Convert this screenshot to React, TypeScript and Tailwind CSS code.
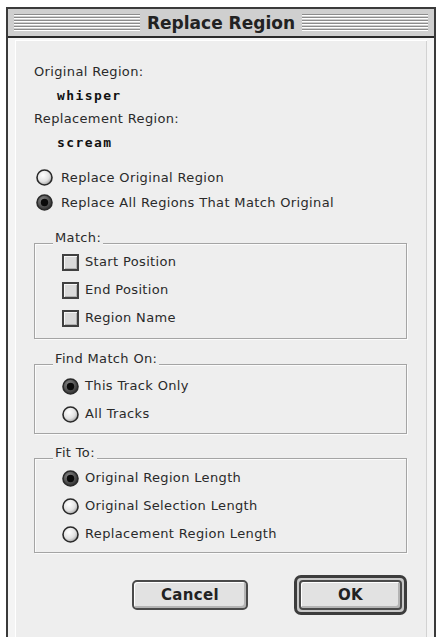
import React from 'react';

const body = "font-['DejaVu_Sans',sans-serif] text-[13px] tracking-[0.35px] text-[#2a2a2a]";

function Radio({ on }: { on?: boolean }) {
  return (
    <svg width="17" height="17" viewBox="0 0 17 17" className="shrink-0">
      <defs>
        <radialGradient id="rOff" cx="0.4" cy="0.35" r="0.7">
          <stop offset="0" stopColor="#ffffff" />
          <stop offset="0.6" stopColor="#e2e2e2" />
          <stop offset="1" stopColor="#9a9a9a" />
        </radialGradient>
        <radialGradient id="rOn" cx="0.4" cy="0.35" r="0.7">
          <stop offset="0" stopColor="#8a8a8a" />
          <stop offset="1" stopColor="#2a2a2a" />
        </radialGradient>
      </defs>
      <circle cx="8.5" cy="8.5" r="7.5" fill={on ? 'url(#rOn)' : 'url(#rOff)'} stroke="#2a2a2a" strokeWidth="1.6" />
      {on && <circle cx="8.5" cy="8.5" r="3.7" fill="#0a0a0a" />}
    </svg>
  );
}

function Check() {
  return (
    <span className="w-[17px] h-[17px] shrink-0 border-2 border-[#404040] bg-[#dadada] shadow-[inset_1px_1px_0_#f6f6f6,inset_-1px_-1px_0_#b0b0b0]" />
  );
}

function Group({ label, children, className }: { label: string; children: React.ReactNode; className: string }) {
  return (
    <div className={`relative ml-[18px] mr-[20px] border border-[#a4a4a4] shadow-[inset_1px_1px_0_#fbfbfb,1px_1px_0_#fbfbfb] ${className}`}>
      <span className="absolute left-[18px] top-[-15px] px-[2px] bg-[#eeeeee] leading-[18px]">{label}</span>
      {children}
    </div>
  );
}

function Row({ children }: { children: React.ReactNode }) {
  return <div className="h-[28px] flex items-center gap-[6px] pl-[27px]">{children}</div>;
}

export default function App() {
  return (
    <div className="w-[437px] h-[637px] bg-white overflow-hidden">
      <div className="ml-[6px] mt-[7px] w-[430px] h-[640px] border-2 border-[#3a3a3a] bg-[#f4f4f4] flex flex-col">
        {/* Title bar */}
        <div className="h-[29px] bg-[#cfcfcf] border-b-2 border-[#2a2a2a] flex items-center px-[6px]">
          <div className="flex-1 h-[18px] bg-[repeating-linear-gradient(to_bottom,#8c8c8c_0px,#8c8c8c_1px,#ffffff_1px,#ffffff_2px,#cfcfcf_2px,#cfcfcf_3px)]" />
          <span className="px-[7px] font-['DejaVu_Sans',sans-serif] font-bold text-[17px] text-[#222] leading-[20px]">Replace Region</span>
          <div className="flex-1 h-[18px] bg-[repeating-linear-gradient(to_bottom,#8c8c8c_0px,#8c8c8c_1px,#ffffff_1px,#ffffff_2px,#cfcfcf_2px,#cfcfcf_3px)]" />
        </div>

        {/* Content */}
        <div className={`mx-[7px] mt-[2px] flex-1 bg-[#eeeeee] border-l border-t border-white shadow-[inset_-1px_0_0_#d2d2d2] ${body}`}>
          <div className="pt-[19px] pl-[18px] leading-[24px]">
            <div>Original Region:</div>
            <div className="pl-[23px] font-['DejaVu_Sans_Mono',monospace] font-bold text-[13px] tracking-[1.4px] text-[#111] leading-[23px]">whisper</div>
            <div>Replacement Region:</div>
            <div className="pl-[23px] font-['DejaVu_Sans_Mono',monospace] font-bold text-[13px] tracking-[1.4px] text-[#111] leading-[23px]">scream</div>
          </div>

          <div className="mt-[11px] pl-[20px]">
            <div className="h-[25px] flex items-center gap-[8px]">
              <Radio />
              <span>Replace Original Region</span>
            </div>
            <div className="h-[25px] flex items-center gap-[8px]">
              <Radio on />
              <span>Replace All Regions That Match Original</span>
            </div>
          </div>

          <Group label="Match:" className="mt-[28px] pt-[4px] pb-[6px]">
            <Row><Check /><span>Start Position</span></Row>
            <Row><Check /><span>End Position</span></Row>
            <Row><Check /><span>Region Name</span></Row>
          </Group>

          <Group label="Find Match On:" className="mt-[25px] pt-[7px] pb-[5px]">
            <Row><Radio on /><span>This Track Only</span></Row>
            <Row><Radio /><span>All Tracks</span></Row>
          </Group>

          <Group label="Fit To:" className="mt-[24px] pt-[5px] pb-[4px]">
            <Row><Radio on /><span>Original Region Length</span></Row>
            <Row><Radio /><span>Original Selection Length</span></Row>
            <Row><Radio /><span>Replacement Region Length</span></Row>
          </Group>

          {/* Buttons */}
          <div className="mt-[22px] flex items-center justify-end pr-[20px] gap-[46px]">
            <button className="w-[116px] h-[30px] rounded-[5px] border-2 border-[#4a4a4a] bg-[#e2e2e2] shadow-[inset_1px_1px_0_#ffffff,inset_-2px_-2px_0_#b4b4b4] font-['DejaVu_Sans',sans-serif] font-bold text-[15px] text-[#222]">
              Cancel
            </button>
            <div className="w-[113px] h-[40px] rounded-[7px] border-[3px] border-[#3c3c3c] bg-[#c8c8c8] p-[2px] flex">
              <button className="flex-1 rounded-[4px] border-2 border-[#4a4a4a] bg-[#e2e2e2] shadow-[inset_1px_1px_0_#ffffff,inset_-2px_-2px_0_#b4b4b4] font-['DejaVu_Sans',sans-serif] font-bold text-[15px] text-[#222]">
                OK
              </button>
            </div>
          </div>
        </div>
      </div>
    </div>
  );
}
